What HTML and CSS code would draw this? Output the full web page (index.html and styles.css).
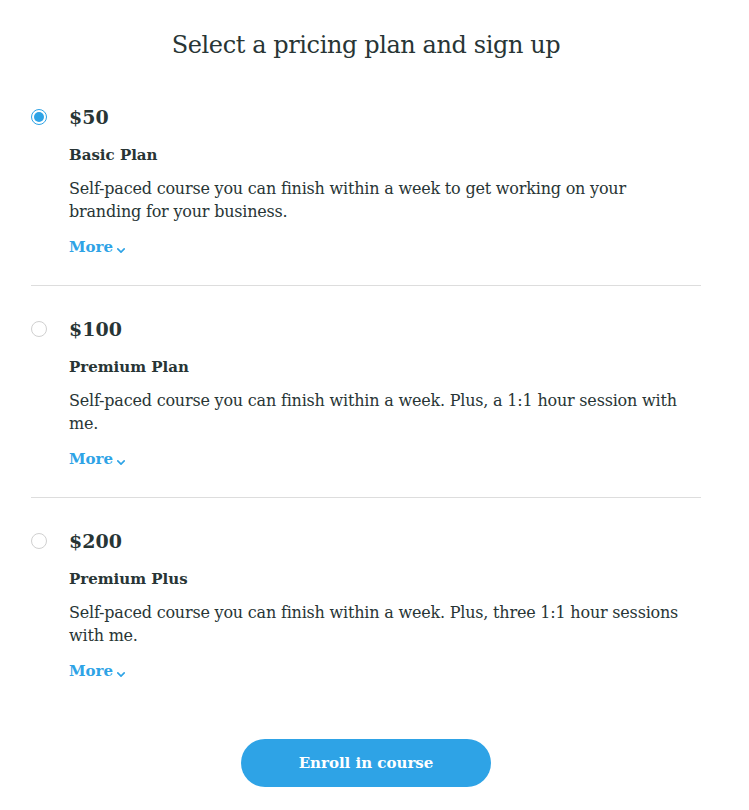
FILE: index.html
```html
<!DOCTYPE html>
<html>
<head>
<meta charset="utf-8">
<link rel="stylesheet" href="styles.css">
</head>
<body>
<div class="page">
  <h1 class="title">Select a pricing plan and sign up</h1>
  <div class="plans">
    <div class="plan">
      <span class="radio checked"></span>
      <div class="plan-body">
        <div class="price">$50</div>
        <div class="name">Basic Plan</div>
        <p class="desc">Self-paced course you can finish within a week to get working on your branding for your business.</p>
        <a class="more">More <svg class="chev" viewBox="0 0 10 6" width="8" height="5"><path d="M1 1l4 4 4-4" fill="none" stroke="currentColor" stroke-width="2" stroke-linecap="round" stroke-linejoin="round"/></svg></a>
      </div>
    </div>
    <div class="plan">
      <span class="radio"></span>
      <div class="plan-body">
        <div class="price">$100</div>
        <div class="name">Premium Plan</div>
        <p class="desc">Self-paced course you can finish within a week. Plus, a 1:1 hour session with me.</p>
        <a class="more">More <svg class="chev" viewBox="0 0 10 6" width="8" height="5"><path d="M1 1l4 4 4-4" fill="none" stroke="currentColor" stroke-width="2" stroke-linecap="round" stroke-linejoin="round"/></svg></a>
      </div>
    </div>
    <div class="plan last">
      <span class="radio"></span>
      <div class="plan-body">
        <div class="price">$200</div>
        <div class="name">Premium Plus</div>
        <p class="desc">Self-paced course you can finish within a week. Plus, three 1:1 hour sessions with me.</p>
        <a class="more">More <svg class="chev" viewBox="0 0 10 6" width="8" height="5"><path d="M1 1l4 4 4-4" fill="none" stroke="currentColor" stroke-width="2" stroke-linecap="round" stroke-linejoin="round"/></svg></a>
      </div>
    </div>
  </div>
  <div class="actions">
    <button class="enroll">Enroll in course</button>
  </div>
</div>
</body>
</html>
```
FILE: styles.css
```css
html, body {
  margin: 0;
  padding: 0;
  background: #ffffff;
}
body {
  font-family: "DejaVu Serif", "Liberation Serif", serif;
  color: #283535;
}
.page {
  width: 670px;
  margin-left: 31px;
  padding-top: 29px;
}
.title {
  margin: 0 0 12px;
  font-size: 24px;
  line-height: 32px;
  font-weight: normal;
  text-align: center;
  letter-spacing: -0.4px;
}
.plan {
  display: flex;
  padding: 29px 0 27px;
  border-bottom: 1px solid #dddddd;
}
.plan:first-child {
  padding-top: 30px;
}
.plan.last {
  border-bottom: none;
}
.radio {
  flex: none;
  box-sizing: border-box;
  width: 16px;
  height: 16px;
  margin-top: 6px;
  margin-right: 22px;
  border: 1px solid #d0d0d0;
  border-radius: 50%;
  display: flex;
  align-items: center;
  justify-content: center;
  background: #fff;
}
.radio.checked {
  border-color: #2ea3e6;
}
.radio.checked::after {
  content: "";
  width: 10px;
  height: 10px;
  border-radius: 50%;
  background: #2ea3e6;
}
.plan-body {
  flex: 1;
}
.price {
  font-size: 19px;
  line-height: 28px;
  font-weight: bold;
}
.name {
  margin-top: 13px;
  font-size: 15px;
  line-height: 22px;
  font-weight: bold;
}
.desc {
  margin: 11px 0 0;
  font-size: 16px;
  line-height: 23px;
  letter-spacing: -0.2px;
}
.more {
  display: inline-flex;
  align-items: center;
  gap: 4px;
  margin-top: 13px;
  font-size: 15px;
  line-height: 22px;
  font-weight: bold;
  color: #2ea3e6;
}
.chev {
  margin-top: 7px;
}
.actions {
  display: flex;
  justify-content: center;
  padding-top: 30px;
}
.enroll {
  width: 250px;
  height: 48px;
  border: none;
  border-radius: 24px;
  background: #2ea3e6;
  color: #ffffff;
  font-family: "DejaVu Serif", "Liberation Serif", serif;
  font-size: 15px;
  font-weight: bold;
}
```
